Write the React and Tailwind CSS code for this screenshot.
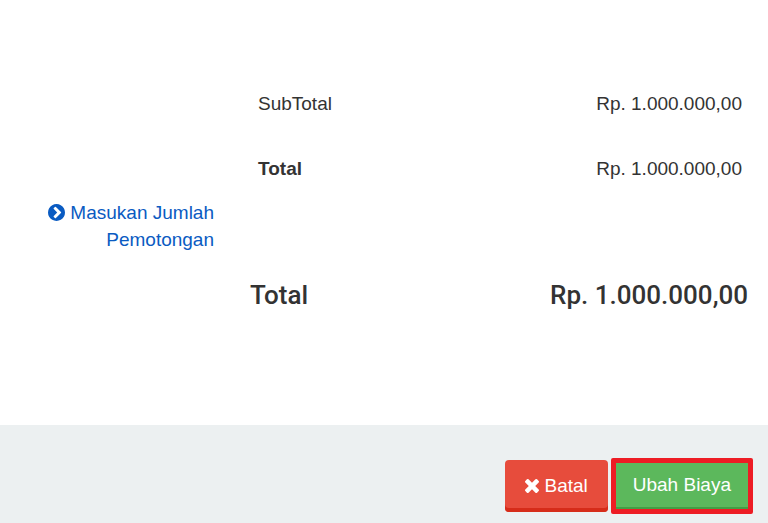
const subtotals = [
	{ label: "SubTotal", value: "Rp. 1.000.000,00", strong: false },
	{ label: "Total", value: "Rp. 1.000.000,00", strong: true },
];

function ChevronCircleIcon({ className }) {
	return (
		<svg viewBox="128 128 1536 1536" fill="currentColor" aria-hidden="true" className={className}>
			<path d="M845 1395l454-454q19-19 19-45t-19-45l-454-454q-19-19-45-19t-45 19l-102 102q-19 19-19 45t19 45l307 307-307 307q-19 19-19 45t19 45l102 102q19 19 45 19t45-19zm819-499q0 209-103 385.5t-279.5 279.5-385.5 103-385.5-103-279.5-279.5-103-385.5 103-385.5 279.5-279.5 385.5-103 385.5 103 279.5 279.5 103 385.5z" />
		</svg>
	);
}

function TimesIcon({ className }) {
	return (
		<svg viewBox="302 366 1188 1188" fill="currentColor" aria-hidden="true" className={className}>
			<path d="M1490 1322q0 40-28 68l-136 136q-28 28-68 28t-68-28l-294-294-294 294q-28 28-68 28t-68-28l-136-136q-28-28-28-68t28-68l294-294-294-294q-28-28-28-68t28-68l136-136q28-28 68-28t68 28l294 294 294-294q28-28 68-28t68 28l136 136q28 28 28 68t-28 68l-294 294 294 294q28 28 28 68z" />
		</svg>
	);
}

function SummaryRow({ label, value, strong }) {
	return (
		<div className="flex justify-between pl-2 pr-[6px] py-[19px] leading-[27px]">
			<span className={strong ? "font-bold" : ""}>{label}</span>
			<span>{value}</span>
		</div>
	);
}

export default function App() {
	return (
		<div className="w-full bg-white font-['Liberation_Sans',Arial,sans-serif] text-[19px] text-[#333]">
			<main className="pt-[71px] pb-[112px]">
				<div className="flex">
					<div className="w-[250px] shrink-0 pt-32 pl-11 pr-9 text-right leading-[27px]">
						<a href="#pemotongan" className="text-[#0a5bc2]">
							<ChevronCircleIcon className="inline size-[17px] -mt-[3px]" /> Masukan Jumlah Pemotongan
						</a>
					</div>
					<div className="grow pr-5">
						{subtotals.map((row) => (
							<SummaryRow key={row.label} {...row} />
						))}
						<div className="mt-[76px] flex justify-between font-[Roboto,sans-serif] text-[26px] leading-[36px] font-medium">
							<span>Total</span>
							<span>{subtotals[1].value}</span>
						</div>
					</div>
				</div>
			</main>

			<footer className="flex items-center justify-end gap-[3px] bg-[#ecf0f1] pt-[33px] pb-[9px] pr-[15px] text-white">
				<button type="button" className="flex h-[52px] items-center gap-[5px] rounded-[4px] bg-[#e74c3c] px-5 shadow-[inset_0_-4px_0_#d62c1a]">
					<TimesIcon className="size-[14px]" />
					Batal
				</button>
				<button type="button" className="h-14 rounded-[2px] border-5 border-[#ed1c24] bg-[#5cb85c] px-[17px] pb-[2px] shadow-[inset_0_-2px_0_#449d44]">
					Ubah Biaya
				</button>
			</footer>
		</div>
	);
}
